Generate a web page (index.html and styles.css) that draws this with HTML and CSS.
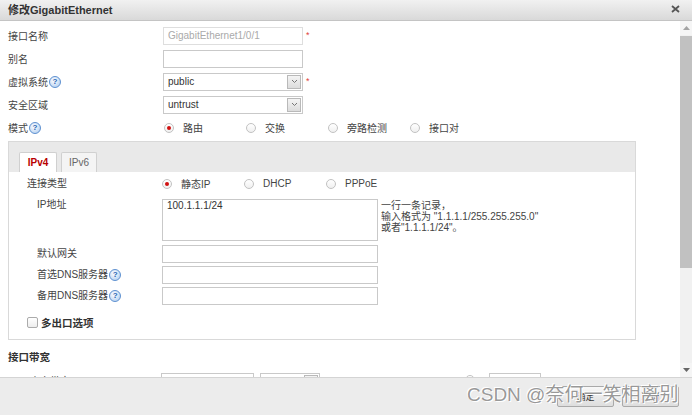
FILE: index.html
```html
<!DOCTYPE html>
<html lang="zh">
<head>
  <meta charset="UTF-8">
  <title>修改GigabitEthernet</title>
  <link rel="stylesheet" href="styles.css">
</head>
<body>
  <div class="dialog">
    <div class="titlebar">
      <span class="title">修改GigabitEthernet</span>
      <svg class="close" width="9" height="8" viewBox="0 0 9 8"><path d="M1 1l7 6M8 1l-7 6" stroke="#555" stroke-width="1.8"/></svg>
    </div>

    <div class="main">
      <div class="body">
        <div class="row">
          <span class="label">接口名称</span>
          <span class="input disabled">GigabitEthernet1/0/1</span>
          <span class="req">*</span>
        </div>
        <div class="row">
          <span class="label">别名</span>
          <span class="input"></span>
        </div>
        <div class="row">
          <span class="label">虚拟系统<span class="help">?</span></span>
          <span class="input select"><span>public</span><span class="arrow"><svg width="7" height="5" viewBox="0 0 7 5"><path d="M1 1l2.5 2.5L6 1" stroke="#777" fill="none"/></svg></span></span>
          <span class="req">*</span>
        </div>
        <div class="row">
          <span class="label">安全区域</span>
          <span class="input select"><span>untrust</span><span class="arrow"><svg width="7" height="5" viewBox="0 0 7 5"><path d="M1 1l2.5 2.5L6 1" stroke="#777" fill="none"/></svg></span></span>
        </div>
        <div class="row">
          <span class="label">模式<span class="help">?</span></span>
          <div class="radios first">
            <span class="opt"><span class="radio on"></span>路由</span>
            <span class="opt"><span class="radio"></span>交换</span>
            <span class="opt"><span class="radio"></span>旁路检测</span>
            <span class="opt"><span class="radio"></span>接口对</span>
          </div>
        </div>

        <div class="panel">
          <div class="tabs">
            <span class="tab active">IPv4</span>
            <span class="tab">IPv6</span>
          </div>
          <div class="panel-body">
            <div class="prow tall">
              <span class="plabel">连接类型</span>
              <div class="radios">
                <span class="opt"><span class="radio on"></span>静态IP</span>
                <span class="opt"><span class="radio"></span>DHCP</span>
                <span class="opt"><span class="radio"></span>PPPoE</span>
              </div>
            </div>
            <div class="prow top gap4">
              <span class="plabel indent">IP地址</span>
              <span class="pinput textarea">100.1.1.1/24</span>
              <span class="hint">一行一条记录，<br>输入格式为 "1.1.1.1/255.255.255.0"<br>或者"1.1.1.1/24"。</span>
            </div>
            <div class="prow gap4">
              <span class="plabel indent">默认网关</span>
              <span class="pinput"></span>
            </div>
            <div class="prow gap3">
              <span class="plabel indent">首选DNS服务器<span class="help">?</span></span>
              <span class="pinput"></span>
            </div>
            <div class="prow gap3">
              <span class="plabel indent">备用DNS服务器<span class="help">?</span></span>
              <span class="pinput"></span>
            </div>
            <div class="prow tall check-row">
              <span class="checkbox"></span>
              <span class="bold">多出口选项</span>
            </div>
          </div>
        </div>

        <div class="section">接口带宽</div>
        <div class="row partial">
          <span class="label short">入方向带宽</span>
          <span class="input w93"></span>
          <span class="input select w60"><span></span><span class="arrow"></span></span>
          <span class="radio far"></span>
          <span class="input w52"></span>
        </div>
      </div>

      <div class="scrollbar">
        <div class="sb-btn"><svg width="7" height="4" viewBox="0 0 7 4"><path d="M0 4L3.5 0 7 4z" fill="#a3a3a3"/></svg></div>
        <div class="sb-thumb"></div>
        <div class="sb-track"></div>
        <div class="sb-btn"><svg width="7" height="4" viewBox="0 0 7 4"><path d="M0 0h7L3.5 4z" fill="#666"/></svg></div>
      </div>
    </div>

    <div class="footer">
      <button class="btn">确定</button>
      <button class="btn">取消</button>
    </div>

    <div class="watermark">CSDN @奈何一笑相离别</div>
  </div>
</body>
</html>
```

FILE: styles.css
```css
body {
  margin: 0;
  font-family: "Liberation Sans", "Noto Sans CJK SC", sans-serif;
  font-size: 10px;
  color: #444;
  background: #fff;
}

.dialog {
  width: 692px;
  height: 415px;
  position: relative;
  display: flex;
  flex-direction: column;
  overflow: hidden;
}

.titlebar {
  height: 21px;
  flex: none;
  box-sizing: border-box;
  display: flex;
  align-items: center;
  justify-content: space-between;
  padding: 0 12px 3px 8px;
  background: linear-gradient(#f1f1f1, #d9d9d9);
  border-bottom: 1px solid #c4c4c4;
}

.title {
  font-size: 11px;
  font-weight: bold;
  color: #333;
}

.main {
  flex: 1;
  display: flex;
  min-height: 0;
}

.body {
  flex: 1;
  overflow: hidden;
  padding: 3px 0 0 8px;
  background: #fff;
}

/* form rows */
.row {
  display: flex;
  align-items: center;
  height: 23px;
}

.label {
  width: 155px;
  flex: none;
  display: flex;
  align-items: center;
}

.label.short {
  width: 153px;
  padding-left: 12px;
  box-sizing: border-box;
}

.input {
  width: 140px;
  height: 18px;
  box-sizing: border-box;
  border: 1px solid #c9c9c9;
  background: #fff;
  padding: 0 4px;
  display: flex;
  align-items: center;
  color: #333;
  flex: none;
}

.input.disabled {
  color: #aaa;
  border-color: #dedede;
}

.select {
  justify-content: space-between;
  padding-right: 1px;
}

.arrow {
  width: 14px;
  height: 14px;
  box-sizing: border-box;
  border: 1px solid #b9b9b9;
  background: linear-gradient(#f4f4f4, #dcdcdc);
  display: flex;
  align-items: center;
  justify-content: center;
}

.req {
  color: #e04040;
  font-size: 9px;
  margin-left: 3px;
  align-self: flex-start;
  margin-top: 6px;
}

.help {
  width: 12px;
  height: 12px;
  box-sizing: border-box;
  border-radius: 50%;
  border: 1px solid #5d90d0;
  background: radial-gradient(circle at 40% 35%, #ffffff, #a8c8ee);
  color: #1f5fb0;
  font-size: 8px;
  font-weight: bold;
  display: inline-flex;
  align-items: center;
  justify-content: center;
  margin-left: 1px;
}

/* radios */
.radios {
  display: flex;
}

.radios.first {
  padding-left: 1px;
}

.opt {
  width: 82px;
  display: flex;
  align-items: center;
  gap: 9px;
}

.radio {
  width: 10px;
  height: 10px;
  flex: none;
  box-sizing: border-box;
  border: 1px solid #c2c2c2;
  border-radius: 50%;
  background: linear-gradient(#ffffff, #f0f0f0);
  display: flex;
  align-items: center;
  justify-content: center;
}

.radio.on::after {
  content: "";
  width: 4px;
  height: 4px;
  border-radius: 50%;
  background: #d01010;
}

/* tab panel */
.panel {
  width: 628px;
  box-sizing: border-box;
  border: 1px solid #d9d9d9;
  margin-top: 2px;
}

.tabs {
  height: 30px;
  box-sizing: border-box;
  background: #e9e9e9;
  display: flex;
  align-items: flex-end;
  gap: 4px;
  padding-left: 10px;
}

.tab {
  width: 36px;
  height: 20px;
  box-sizing: border-box;
  border: 1px solid #d0d0d0;
  border-bottom: none;
  border-radius: 2px 2px 0 0;
  background: #f4f4f4;
  color: #666;
  display: flex;
  align-items: center;
  justify-content: center;
}

.tab.active {
  width: 38px;
  background: #fff;
  color: #b80000;
  font-weight: bold;
}

.panel-body {
  padding: 0 0 5px 18px;
}

.prow {
  display: flex;
  align-items: center;
}

.prow.tall {
  height: 23px;
}

.prow.top {
  align-items: flex-start;
}

.gap4 {
  margin-top: 4px;
}

.gap3 {
  margin-top: 3px;
}

.plabel {
  width: 135px;
  flex: none;
  display: flex;
  align-items: center;
  line-height: 12px;
}

.plabel.indent {
  padding-left: 10px;
  box-sizing: border-box;
}

.pinput {
  width: 216px;
  height: 18px;
  box-sizing: border-box;
  border: 1px solid #c9c9c9;
  background: #fff;
  padding: 0 4px;
  display: flex;
  align-items: center;
  color: #333;
}

.pinput.textarea {
  height: 42px;
  align-items: flex-start;
  padding: 0 4px;
  line-height: 12px;
}

.hint {
  margin-left: 3px;
  line-height: 11px;
  padding-top: 1px;
}

.check-row {
  margin-top: 6px;
}

.checkbox {
  width: 11px;
  height: 11px;
  box-sizing: border-box;
  border: 1px solid #ababab;
  border-radius: 2px;
  background: linear-gradient(#ffffff, #ededed);
  margin-right: 3px;
}

.bold {
  font-weight: bold;
  font-size: 10.5px;
  color: #333;
}

.section {
  height: 23px;
  margin-top: 5px;
  display: flex;
  align-items: center;
  font-weight: bold;
  font-size: 10.5px;
  color: #333;
}

.partial {
  align-items: flex-start;
  margin-top: 5px;
}

.w93 {
  width: 93px;
}

.w60 {
  width: 60px;
  margin-left: 6px;
}

.w52 {
  width: 52px;
  margin-left: 14px;
}

.radio.far {
  margin-left: 145px;
  margin-top: 2px;
}

/* scrollbar */
.scrollbar {
  width: 12px;
  flex: none;
  display: flex;
  flex-direction: column;
  background: #f1f1f1;
}

.sb-btn {
  height: 14px;
  display: flex;
  align-items: center;
  justify-content: center;
  background: #f5f5f5;
}

.sb-thumb {
  height: 232px;
  margin-top: 1px;
  background: #c1c1c1;
}

.sb-track {
  flex: 1;
}

/* footer */
.footer {
  height: 38px;
  flex: none;
  box-sizing: border-box;
  border-top: 1px solid #d4d4d4;
  background: #ececec;
  display: flex;
  justify-content: flex-end;
  align-items: center;
  gap: 8px;
  padding-right: 13px;
}

.btn {
  width: 57px;
  height: 21px;
  font-family: "Liberation Sans", "Noto Sans CJK SC", sans-serif;
  font-size: 9px;
  color: #333;
  border: 1px solid #a9a9a9;
  border-radius: 2px;
  background: linear-gradient(#f8f8f8, #dddddd);
  padding: 0;
}

.watermark {
  position: absolute;
  left: 467px;
  top: 384px;
  font-size: 19px;
  line-height: 22px;
  color: rgba(125, 125, 125, 0.8);
  text-shadow: 0 0 1px #fff, 1px 1px 0 #fff, -1px -1px 0 #fff;
  white-space: nowrap;
}
```
